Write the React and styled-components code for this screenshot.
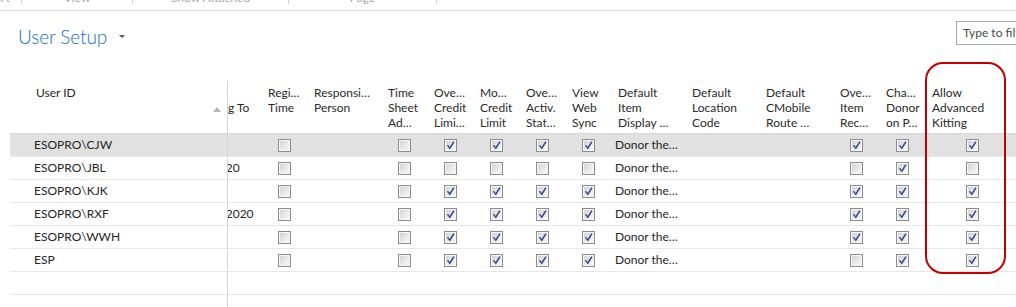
import React from "react";
import styled, { createGlobalStyle } from "styled-components";

const GlobalStyle = createGlobalStyle`
  html, body { margin: 0; padding: 0; background: #ffffff; }
  body {
    width: 1016px;
    height: 307px;
    overflow: hidden;
    font-family: Lato, "Open Sans", "Liberation Sans", sans-serif;
    color: #262626;
  }
`;

const Page = styled.div`
  position: relative;
  width: 1016px;
  height: 307px;
  overflow: hidden;
`;

/* ---------- ribbon ---------- */
const Ribbon = styled.div`
  display: flex;
  height: 10px;
  border-bottom: 1px solid #d9d9d9;
  overflow: hidden;
`;

const RibbonGroup = styled.div`
  width: ${(p) => p.$w}px;
  flex: none;
  display: flex;
  justify-content: ${(p) => (p.$end ? "flex-end" : "center")};
  padding-right: ${(p) => p.$pr || 0}px;
  box-sizing: border-box;
  overflow: hidden;
  white-space: nowrap;
  font-size: 12px;
  line-height: 12px;
  color: #a8a8a8;
  margin-top: -8px;
`;

const RibbonSep = styled.div`
  width: 1px;
  height: 4px;
  flex: none;
  background: #cfcfcf;
`;

/* ---------- title bar ---------- */
const TitleBar = styled.div`
  display: flex;
  align-items: flex-start;
  height: 70px;
  padding-left: 18px;
`;

const Title = styled.div`
  margin-top: 14px;
  font-size: 19px;
  font-weight: 300;
  line-height: 24px;
  color: #1a6ec8;
  letter-spacing: -0.1px;
`;

const Caret = styled.span`
  margin-top: 24px;
  margin-left: 12px;
  width: 0;
  height: 0;
  border-left: 3px solid transparent;
  border-right: 3px solid transparent;
  border-top: 3px solid #555555;
`;

const FilterBox = styled.div`
  margin-left: auto;
  margin-top: 10px;
  margin-right: -30px;
  width: 90px;
  height: 24px;
  box-sizing: border-box;
  border: 1px solid #a9a9a9;
  padding-left: 6px;
  font-size: 12px;
  line-height: 22px;
  color: #4a4a4a;
  white-space: nowrap;
  overflow: hidden;
`;

/* ---------- grid ---------- */
const Grid = styled.div`
  margin-left: 10px;
  display: flex;
  flex-direction: column;
`;

const Row = styled.div`
  display: flex;
  height: ${(p) => (p.$header ? "52px" : "22px")};
  border-bottom: ${(p) =>
    p.$last ? "none" : `1px solid ${p.$header ? "#d6d6d6" : "#e6e6e6"}`};
  background: ${(p) => (p.$selected ? "#e1e1e1" : "transparent")};
  font-size: 12px;
`;

const FrozenCell = styled.div`
  width: 217px;
  flex: none;
  display: flex;
  justify-content: space-between;
  box-sizing: border-box;
  padding-left: ${(p) => (p.$header ? 26 : 24)}px;
  padding-right: 6px;
  padding-top: ${(p) => (p.$header ? 4 : 0)}px;
  line-height: ${(p) => (p.$header ? 15 : 22)}px;
  white-space: nowrap;
`;

const SortArrow = styled.span`
  margin-top: 22px;
  width: 0;
  height: 0;
  border-left: 4.5px solid transparent;
  border-right: 4.5px solid transparent;
  border-bottom: 5px solid #b5b5b5;
`;

const ScrollPane = styled.div`
  flex: 1;
  min-width: 0;
  overflow: hidden;
  border-left: 1px solid #d3d3d3;
`;

const Strip = styled.div`
  display: flex;
  height: 100%;
  margin-left: -37px;
`;

const HeadCell = styled.div`
  width: ${(p) => p.$w}px;
  flex: none;
  box-sizing: border-box;
  padding: 4px 0 0 ${(p) => p.$pl}px;
  line-height: 15px;
  white-space: nowrap;
  overflow: hidden;
  color: #2a2a2a;
`;

const TextCell = styled.div`
  width: ${(p) => p.$w}px;
  flex: none;
  box-sizing: border-box;
  padding-left: 3px;
  line-height: 22px;
  white-space: nowrap;
  overflow: hidden;
`;

const CheckCell = styled.div`
  width: ${(p) => p.$w}px;
  flex: none;
  box-sizing: border-box;
  padding-left: ${(p) => p.$pad}px;
  display: flex;
  align-items: center;
`;

const Box = styled.span`
  width: 13px;
  height: 13px;
  box-sizing: border-box;
  border: 1px solid #8c8c8c;
  box-shadow: inset 0 0 0 1px #f6f6f6;
  background: linear-gradient(135deg, #cfcfcf 0%, #e9e9e9 55%, #fafafa 100%);
  display: flex;
  align-items: center;
  justify-content: center;
`;

const Annotation = styled.div`
  position: absolute;
  left: 925px;
  top: 62px;
  width: 81px;
  height: 212px;
  box-sizing: border-box;
  border: 2px solid #c20000;
  border-radius: 18px;
  pointer-events: none;
`;

const Check = ({ on }) => (
  <Box>
    {on ? (
      <svg width="11" height="11" viewBox="0 0 11 11">
        <path
          d="M1.8 5.6 L3.3 5 L4.6 7.1 L8.3 1.3 L9.6 2 L4.9 9.6 Z"
          fill="#33498c"
        />
      </svg>
    ) : null}
  </Box>
);

const cols = [
  { key: "date", w: 71, head: ["Allow", "Posting To"], type: "text", hpl: 4 },
  { key: "reg", w: 46, head: ["Regi…", "Time"], type: "cb" },
  { key: "resp", w: 74, head: ["Responsi…", "Person"], type: "text" },
  { key: "ts", w: 46, head: ["Time", "Sheet", "Ad…"], type: "cb" },
  { key: "oc", w: 46, head: ["Ove…", "Credit", "Limi…"], type: "cb" },
  { key: "mc", w: 46, head: ["Mo…", "Credit", "Limit"], type: "cb" },
  { key: "oa", w: 46, head: ["Ove…", "Activ.", "Stat…"], type: "cb" },
  { key: "vw", w: 46, head: ["View", "Web", "Sync"], type: "cb" },
  { key: "item", w: 74, head: ["Default", "Item", "Display …"], type: "text" },
  { key: "loc", w: 74, head: ["Default", "Location", "Code"], type: "text" },
  { key: "route", w: 74, head: ["Default", "CMobile", "Route …"], type: "text" },
  { key: "oi", w: 46, head: ["Ove…", "Item", "Rec…"], type: "cb" },
  { key: "cd", w: 46, head: ["Cha…", "Donor", "on P…"], type: "cb" },
  { key: "ak", w: 92, head: ["Allow", "Advanced", "Kitting"], type: "cb", pad: 40 },
];

const base = { resp: "", item: "Donor the…", loc: "", route: "", reg: 0, ts: 0 };
const rows = [
  { ...base, id: "ESOPRO\\CJW", date: "", oc: 1, mc: 1, oa: 1, vw: 1, oi: 1, cd: 1, ak: 1, sel: true },
  { ...base, id: "ESOPRO\\JBL", date: "12/1/20", oc: 0, mc: 0, oa: 0, vw: 0, oi: 0, cd: 1, ak: 0 },
  { ...base, id: "ESOPRO\\KJK", date: "", oc: 1, mc: 1, oa: 1, vw: 1, oi: 1, cd: 1, ak: 1 },
  { ...base, id: "ESOPRO\\RXF", date: "12/1/2020", oc: 1, mc: 1, oa: 1, vw: 1, oi: 1, cd: 1, ak: 1 },
  { ...base, id: "ESOPRO\\WWH", date: "", oc: 1, mc: 1, oa: 1, vw: 1, oi: 1, cd: 1, ak: 1 },
  { ...base, id: "ESP", date: "", oc: 1, mc: 1, oa: 1, vw: 1, oi: 0, cd: 1, ak: 1 },
];

export default function App() {
  return (
    <Page>
      <GlobalStyle />
      <Ribbon>
        <RibbonGroup $w={21} $end $pr={11}>Report</RibbonGroup>
        <RibbonSep />
        <RibbonGroup $w={110}>View</RibbonGroup>
        <RibbonSep />
        <RibbonGroup $w={155}>Show Attached</RibbonGroup>
        <RibbonSep />
        <RibbonGroup $w={147}>Page</RibbonGroup>
        <RibbonSep />
      </Ribbon>

      <TitleBar>
        <Title>User Setup</Title>
        <Caret />
        <FilterBox>Type to filter</FilterBox>
      </TitleBar>

      <Grid>
        <Row $header>
          <FrozenCell $header>
            <span>User ID</span>
            <SortArrow />
          </FrozenCell>
          <ScrollPane>
            <Strip>
              {cols.map((c) => (
                <HeadCell key={c.key} $w={c.w} $pl={c.hpl ?? 6}>
                  {c.head.map((l, i) => (
                    <div key={i}>{l}</div>
                  ))}
                </HeadCell>
              ))}
            </Strip>
          </ScrollPane>
        </Row>

        {rows.map((r) => (
          <Row key={r.id} $selected={r.sel}>
            <FrozenCell>{r.id}</FrozenCell>
            <ScrollPane>
              <Strip>
                {cols.map((c) =>
                  c.type === "cb" ? (
                    <CheckCell key={c.key} $w={c.w} $pad={c.pad || 16}>
                      <Check on={!!r[c.key]} />
                    </CheckCell>
                  ) : (
                    <TextCell key={c.key} $w={c.w}>
                      {r[c.key]}
                    </TextCell>
                  )
                )}
              </Strip>
            </ScrollPane>
          </Row>
        ))}

        <Row>
          <FrozenCell />
          <ScrollPane />
        </Row>
        <Row $last>
          <FrozenCell />
          <ScrollPane />
        </Row>
      </Grid>

      <Annotation />
    </Page>
  );
}
